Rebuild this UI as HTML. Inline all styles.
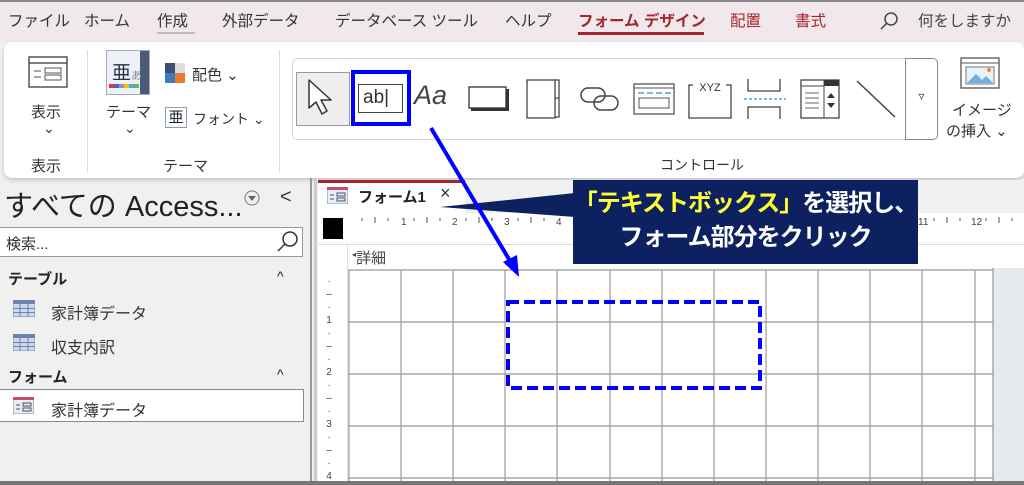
<!DOCTYPE html>
<html><head><meta charset="utf-8"><style>
*{margin:0;padding:0;box-sizing:border-box}
body{width:1024px;height:485px;overflow:hidden;background:#f0f0f0;font-family:"Liberation Sans","Noto Sans CJK JP",sans-serif;color:#222;position:relative}
.a{position:absolute;white-space:nowrap}
.tab{position:absolute;top:9px;font-size:15.5px;color:#333}
.g{font-size:14px;color:#333}
.r{position:absolute;top:217px;font-size:10px;color:#444}
</style></head><body>
<!-- top tab bar -->
<div class="a" style="left:0;top:0;width:1024px;height:42px;background:#f1e8ec;border-top:2px solid #888"></div>
<div class="tab" style="left:8px">ファイル</div>
<div class="tab" style="left:84px">ホーム</div>
<div class="tab" style="left:157px">作成</div>
<div class="a" style="left:157px;top:32px;width:38px;height:2px;background:#bbb"></div>
<div class="tab" style="left:222px">外部データ</div>
<div class="tab" style="left:335px">データベース ツール</div>
<div class="tab" style="left:505px">ヘルプ</div>
<div class="tab" style="left:578px;color:#a4262c;font-weight:bold">フォーム デザイン</div>
<div class="a" style="left:578px;top:32px;width:126px;height:3px;background:#a4262c"></div>
<div class="tab" style="left:730px;color:#a4262c">配置</div>
<div class="tab" style="left:795px;color:#a4262c">書式</div>
<svg class="a" style="left:878px;top:10px" width="22" height="22"><circle cx="13" cy="9" r="6" fill="none" stroke="#444" stroke-width="1.5"/><line x1="9" y1="13" x2="3" y2="19" stroke="#444" stroke-width="1.5"/></svg>
<div class="tab" style="left:918px;color:#444">何をしますか</div>

<!-- ribbon -->
<div class="a" style="left:4px;top:42px;width:1020px;height:136px;background:#fff;border-radius:8px;box-shadow:0 2px 4px rgba(0,0,0,.2)"></div>
<svg class="a" style="left:28px;top:56px" width="40" height="32"><rect x="1" y="1" width="38" height="30" fill="#fff" stroke="#555" stroke-width="1.5"/><line x1="1" y1="7" x2="39" y2="7" stroke="#555" stroke-width="1.5"/><line x1="6" y1="15" x2="13" y2="15" stroke="#555"/><line x1="6" y1="21" x2="13" y2="21" stroke="#555"/><rect x="17" y="12" width="16" height="5" fill="none" stroke="#555"/><rect x="17" y="19" width="16" height="5" fill="none" stroke="#555"/></svg>
<div class="a g" style="left:31px;top:101px;font-size:15px">表示</div>
<div class="a g" style="left:43px;top:120px">⌄</div>
<div class="a g" style="left:31px;top:155px;font-size:15px">表示</div>
<div class="a" style="left:87px;top:50px;width:1px;height:122px;background:#ddd"></div>
<div class="a" style="left:106px;top:50px;width:44px;height:45px;border:1px solid #aab;background:#eef2f8"></div>
<div class="a" style="left:140px;top:51px;width:9px;height:43px;background:#4a5a78"></div>
<div class="a" style="left:112px;top:58px;font-size:19px;color:#234">亜<span style="font-size:11px;color:#889">あ</span></div>
<div class="a" style="left:109px;top:84px;width:30px;height:4px;background:linear-gradient(90deg,#e33 0 16%,#46c 16% 33%,#a8a 33% 50%,#fb0 50% 66%,#4ae 66% 83%,#6b4 83%)"></div>
<div class="a g" style="left:106px;top:101px;font-size:15px">テーマ</div>
<div class="a g" style="left:124px;top:120px">⌄</div>
<div class="a" style="left:165px;top:63px;width:10px;height:10px;background:#3d4f6e"></div>
<div class="a" style="left:175px;top:63px;width:10px;height:10px;background:#ddd"></div>
<div class="a" style="left:165px;top:73px;width:10px;height:10px;background:#3f78c8"></div>
<div class="a" style="left:175px;top:73px;width:10px;height:10px;background:#ea7a2c"></div>
<div class="a g" style="left:192px;top:64px;font-size:15px">配色 ⌄</div>
<div class="a" style="left:165px;top:107px;width:22px;height:21px;border:1px solid #99a;font-size:15px;line-height:19px;text-align:center;color:#123">亜</div>
<div class="a g" style="left:193px;top:109px;font-size:14px">フォント ⌄</div>
<div class="a g" style="left:163px;top:155px;font-size:15px">テーマ</div>
<div class="a" style="left:279px;top:50px;width:1px;height:122px;background:#ddd"></div>
<!-- gallery -->
<div class="a" style="left:292px;top:58px;width:646px;height:82px;border:1px solid #d8d8d8;border-radius:5px;background:#fff"></div>
<div class="a" style="left:905px;top:58px;width:33px;height:82px;border:1px solid #888;border-radius:0 5px 5px 0;background:#fff;text-align:center;font-size:12px;padding-top:30px;color:#333">▿</div>
<div class="a" style="left:296px;top:72px;width:54px;height:54px;background:#eee;border:1px solid #999"></div>
<svg class="a" style="left:306px;top:78px" width="32" height="42"><path d="M3 2 L3 30 L10 24 L16 36 L21 33 L15 22 L25 22 Z" fill="#fff" stroke="#333" stroke-width="1.5" stroke-linejoin="round"/></svg>
<div class="a" style="left:351px;top:70px;width:60px;height:56px;border:4px solid #0000ff"></div>
<div class="a" style="left:358px;top:84px;width:45px;height:29px;border:1.5px solid #444;font-size:19px;line-height:25px;padding-left:4px;color:#333">ab|</div>
<div class="a" style="left:414px;top:80px;font-size:27px;font-style:italic;color:#444">Aa</div>
<svg class="a" style="left:468px;top:86px" width="42" height="26"><rect x="3" y="3" width="38" height="22" fill="#333"/><rect x="1" y="1" width="37" height="21" fill="#fff" stroke="#333" stroke-width="1.3"/></svg>
<svg class="a" style="left:526px;top:79px" width="36" height="40"><rect x="1" y="1" width="28" height="38" fill="#fff" stroke="#444" stroke-width="1.3"/><path d="M29 1 H33 V19 H29 M29 19 H33 V38 H29" fill="none" stroke="#444" stroke-width="1.3"/></svg>
<svg class="a" style="left:579px;top:84px" width="42" height="30"><rect x="2" y="4" width="24" height="14" rx="7" fill="none" stroke="#444" stroke-width="1.5"/><rect x="15" y="12" width="24" height="14" rx="7" fill="none" stroke="#444" stroke-width="1.5"/></svg>
<svg class="a" style="left:633px;top:83px" width="42" height="32"><rect x="1" y="1" width="40" height="30" fill="#fff" stroke="#555" stroke-width="1.3"/><line x1="1" y1="5" x2="41" y2="5" stroke="#555"/><line x1="5" y1="10" x2="38" y2="10" stroke="#4aa3df" stroke-width="1.5" stroke-dasharray="6 3"/><rect x="6" y="15" width="30" height="10" fill="none" stroke="#555"/></svg>
<svg class="a" style="left:688px;top:79px" width="44" height="40"><path d="M5 6 H1 V39 H43 V6 H38" fill="none" stroke="#444" stroke-width="1.3"/><text x="22" y="12" font-size="11" text-anchor="middle" fill="#333" font-family="Liberation Sans">XYZ</text></svg>
<svg class="a" style="left:744px;top:79px" width="42" height="40"><path d="M4 0 V12 H36 V0 M4 40 V28 H36 V40" fill="none" stroke="#444" stroke-width="1.3"/><line x1="0" y1="20" x2="42" y2="20" stroke="#4aa3df" stroke-width="1.5" stroke-dasharray="3 2"/></svg>
<svg class="a" style="left:800px;top:79px" width="40" height="40"><rect x="1" y="1" width="38" height="38" fill="#fff" stroke="#444" stroke-width="1.3"/><rect x="24" y="1" width="15" height="6" fill="#333"/><line x1="24" y1="1" x2="24" y2="39" stroke="#444"/><line x1="1" y1="7" x2="24" y2="7" stroke="#444"/><path d="M5 14 H19 M5 19 H19 M5 24 H19 M5 29 H19" stroke="#666"/><path d="M27 19 L31 14 L35 19 Z M27 24 L31 29 L35 24 Z" fill="#333"/></svg>
<svg class="a" style="left:856px;top:80px" width="40" height="38"><line x1="1" y1="1" x2="39" y2="37" stroke="#444" stroke-width="1.5"/></svg>
<svg class="a" style="left:960px;top:57px" width="40" height="32"><rect x="1" y="1" width="38" height="30" fill="#fff" stroke="#555" stroke-width="1.3"/><line x1="1" y1="6" x2="39" y2="6" stroke="#555"/><rect x="6" y="10" width="28" height="17" fill="#e8f2fb" stroke="#777"/><path d="M7 26 L16 17 L22 23 L26 19 L33 26 Z" fill="#6ab0e6"/><circle cx="29" cy="13" r="2" fill="#f0883e"/></svg>
<div class="a g" style="left:952px;top:99px;font-size:15px">イメージ</div>
<div class="a g" style="left:946px;top:120px;font-size:15px">の挿入 ⌄</div>
<div class="a g" style="left:660px;top:155px;font-size:14px">コントロール</div>

<!-- nav pane -->
<div class="a" style="left:4px;top:183px;font-size:29px;color:#222">すべての Access...</div>
<svg class="a" style="left:243px;top:189px" width="18" height="18"><circle cx="9" cy="9" r="7" fill="none" stroke="#777"/><path d="M5 7 L13 7 L9 12 Z" fill="#666"/></svg>
<div class="a" style="left:280px;top:186px;font-size:20px;color:#333">&lt;</div>
<div class="a" style="left:0;top:227px;width:303px;height:30px;background:#fff;border:1px solid #999;border-left:none;font-size:15px;padding:5px 0 0 6px;color:#333">検索...</div>
<svg class="a" style="left:276px;top:230px" width="24" height="24"><circle cx="14" cy="9" r="7" fill="none" stroke="#333" stroke-width="1.5"/><line x1="9" y1="14" x2="2" y2="21" stroke="#333" stroke-width="1.5"/></svg>
<div class="a" style="left:8px;top:268px;font-size:15px;font-weight:bold">テーブル</div>
<div class="a" style="left:277px;top:268px;font-size:14px">^</div>
<svg class="a" style="left:13px;top:300px" width="22" height="17"><rect x="0" y="0" width="22" height="17" fill="#cfd9ea" stroke="#6d83ad"/><rect x="0" y="0" width="22" height="4" fill="#6d83ad"/><path d="M7 4 V17 M15 4 V17 M0 8.5 H22 M0 12.5 H22" stroke="#6d83ad"/></svg>
<div class="a" style="left:51px;top:300px;font-size:16px;color:#333">家計簿データ</div>
<svg class="a" style="left:13px;top:334px" width="22" height="17"><rect x="0" y="0" width="22" height="17" fill="#cfd9ea" stroke="#6d83ad"/><rect x="0" y="0" width="22" height="4" fill="#6d83ad"/><path d="M7 4 V17 M15 4 V17 M0 8.5 H22 M0 12.5 H22" stroke="#6d83ad"/></svg>
<div class="a" style="left:51px;top:334px;font-size:16px;color:#333">収支内訳</div>
<div class="a" style="left:8px;top:366px;font-size:15px;font-weight:bold">フォーム</div>
<div class="a" style="left:277px;top:366px;font-size:14px">^</div>
<div class="a" style="left:0;top:389px;width:304px;height:33px;background:#fff;border:1px solid #888;border-left:none"></div>
<svg class="a" style="left:13px;top:397px" width="21" height="17"><rect x="0" y="0" width="21" height="17" fill="#e8ecf5" stroke="#889"/><rect x="0" y="0" width="21" height="3" fill="#c0506a"/><path d="M3 8 H7 M3 12 H7" stroke="#456"/><rect x="10" y="6" width="8" height="3" fill="none" stroke="#456"/><rect x="10" y="11" width="8" height="3" fill="none" stroke="#456"/></svg>
<div class="a" style="left:51px;top:397px;font-size:16px;color:#333">家計簿データ</div>
<div class="a" style="left:310px;top:178px;width:2px;height:307px;background:#999"></div>
<div class="a" style="left:314px;top:178px;width:3px;height:307px;background:#ccc"></div>

<!-- document area -->
<div class="a" style="left:317px;top:180px;width:707px;height:305px;background:#f0f0f0"></div>
<div class="a" style="left:318px;top:180px;width:147px;height:33px;background:#fff;border-top:3px solid #a4262c"></div>
<svg class="a" style="left:327px;top:187px" width="21" height="17"><rect x="0" y="0" width="21" height="17" fill="#e8ecf5" stroke="#889"/><rect x="0" y="0" width="21" height="3" fill="#c0506a"/><path d="M3 8 H7 M3 12 H7" stroke="#456"/><rect x="10" y="6" width="8" height="3" fill="none" stroke="#456"/><rect x="10" y="11" width="8" height="3" fill="none" stroke="#456"/></svg>
<div class="a" style="left:358px;top:186px;font-size:15px;font-weight:bold">フォーム1</div>
<div class="a" style="left:440px;top:183px;font-size:18px;color:#333">×</div>
<div class="a" style="left:318px;top:213px;width:706px;height:272px;background:#fff"></div>
<div class="a" style="left:323px;top:218px;width:20px;height:21px;background:#000"></div>
<svg class="a" style="left:348px;top:215px" width="676" height="20"><g stroke="#555" stroke-width="1"><path d="M14 3v3M27 2v6M40 3v3M66 3v3M79 2v6M92 3v3M118 3v3M131 2v6M144 3v3M170 3v3M183 2v6M196 3v3M586 3v3M599 2v6M612 3v3M638 3v3M651 2v6M664 3v3"/></g></svg>
<div class="r" style="left:401px">1</div><div class="r" style="left:452px">2</div><div class="r" style="left:504px">3</div><div class="r" style="left:556px">4</div><div class="r" style="left:918px">11</div><div class="r" style="left:971px">12</div>
<div class="a" style="left:318px;top:244px;width:706px;height:1px;background:#ddd"></div>
<div class="a" style="left:347px;top:245px;width:677px;height:24px;background:#fff;border-left:1px solid #ddd"></div>
<div class="a" style="left:352px;top:247px;font-size:15px;color:#444"><sup style="font-size:8px">◂</sup>詳細</div>
<div class="a" style="left:318px;top:268px;width:30px;height:217px;border-right:1px solid #ddd"></div>
<div class="a" style="left:325px;top:275px;font-size:10px;line-height:13px;color:#444;text-align:center;width:8px">·<br>–<br>·<br>1<br>·<br>–<br>·<br>2<br>·<br>–<br>·<br>3<br>·<br>–<br>·<br>4</div>
<svg class="a" style="left:348px;top:268px" width="676" height="217">
<rect x="0" y="0" width="676" height="217" fill="#fff"/>
<rect x="645" y="0" width="31" height="217" fill="#e6e9ee"/>
<g stroke="#999" stroke-width="1.2">
<line x1="0" y1="2" x2="645" y2="2"/><line x1="0" y1="54" x2="645" y2="54"/><line x1="0" y1="106" x2="645" y2="106"/><line x1="0" y1="158" x2="645" y2="158"/><line x1="0" y1="210" x2="645" y2="210"/>
<line x1="1" y1="2" x2="1" y2="217"/><line x1="53" y1="2" x2="53" y2="217"/><line x1="105" y1="2" x2="105" y2="217"/><line x1="157" y1="2" x2="157" y2="217"/><line x1="209" y1="2" x2="209" y2="217"/><line x1="262" y1="2" x2="262" y2="217"/><line x1="314" y1="2" x2="314" y2="217"/><line x1="366" y1="2" x2="366" y2="217"/><line x1="418" y1="2" x2="418" y2="217"/><line x1="470" y1="2" x2="470" y2="217"/><line x1="522" y1="2" x2="522" y2="217"/><line x1="574" y1="2" x2="574" y2="217"/><line x1="627" y1="2" x2="627" y2="217"/><line x1="645" y1="0" x2="645" y2="217"/>
</g>
<rect x="160" y="34" width="252" height="86" fill="none" stroke="#0000ff" stroke-width="4" stroke-dasharray="11 5"/>
</svg>
<div class="a" style="left:0;top:481px;width:1024px;height:4px;background:#777"></div>

<!-- callout -->
<svg class="a" style="left:430px;top:180px" width="150" height="50"><path d="M10 27 L145 13 L145 37 Z" fill="#0d2160"/></svg>
<div class="a" style="left:573px;top:180px;width:345px;height:84px;background:#0d2160;color:#fff;font-weight:bold;font-size:24px;line-height:34px;text-align:center;padding-top:7px;letter-spacing:-1px"><span style="color:#ffff33">「テキストボックス」</span>を選択し、<br>フォーム部分をクリック</div>

<!-- arrow -->
<svg class="a" style="left:0;top:0" width="1024" height="485"><line x1="431" y1="128" x2="513" y2="266" stroke="#0000ff" stroke-width="4"/><path d="M519 277 L503 262 L517 255 Z" fill="#0000ff"/></svg>
</body></html>
